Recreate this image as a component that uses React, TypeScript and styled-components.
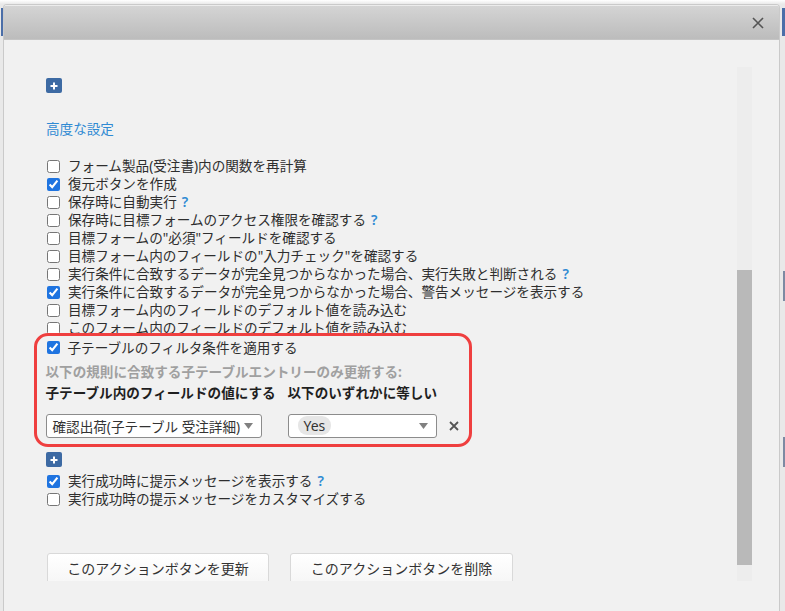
import React from "react";
import styled, { createGlobalStyle } from "styled-components";

const Global = createGlobalStyle`
  html, body { margin: 0; padding: 0; background: #f3f3f3; }
  body { font-family: "Noto Sans", "Noto Sans CJK JP", sans-serif; }
  * { box-sizing: border-box; }
`;

const Page = styled.div`
  display: flex;
  width: 785px;
  height: 611px;
  padding-top: 4px;
  overflow: hidden;
  background: linear-gradient(#ffffff 0, #e9e9e9 4px);
`;

const Gutter = styled.div<{ $w: number }>`
  width: ${(p) => p.$w}px;
  flex: none;
  display: flex;
  flex-direction: column;
  align-items: flex-end;
`;

const Mark = styled.div<{ $top: number; $h: number; $c: string; $w?: number }>`
  margin-top: ${(p) => p.$top}px;
  height: ${(p) => p.$h}px;
  width: ${(p) => p.$w ?? 3}px;
  background: ${(p) => p.$c};
`;

const Dialog = styled.div`
  width: 777px;
  height: 607px;
  flex: none;
  display: flex;
  flex-direction: column;
  border: 1px solid #cacaca;
  border-bottom: none;
  border-radius: 4px 4px 0 0;
  background: #f1f1f1;
  overflow: hidden;
`;

const Header = styled.div`
  height: 35px;
  flex: none;
  display: flex;
  align-items: center;
  justify-content: flex-end;
  padding-right: 14px;
  background: linear-gradient(#d4d4d4, #bcbcbc);
  border-top: 1px solid #ececec;
  border-bottom: 1px solid #c4c4c4;
`;

const CloseBtn = styled.button`
  width: 14px;
  height: 14px;
  padding: 0;
  border: none;
  background: none;
  display: flex;
  align-items: center;
  justify-content: center;
`;

const Body = styled.div`
  display: flex;
  padding: 27px 27px 0 26px;
  gap: 12px;
`;

const Viewport = styled.div`
  flex: 1;
  height: 514px;
  overflow: hidden;
  padding-left: 16px;
  display: flex;
  flex-direction: column;
  color: #2e2e2e;
  font-family: "Noto Sans", "Noto Sans CJK JP", sans-serif;
  font-size: 13.6px;
`;

const Track = styled.div`
  width: 15px;
  height: 514px;
  flex: none;
  background: #ededed;
  display: flex;
  flex-direction: column;
`;

const Thumb = styled.div`
  margin-top: 203px;
  height: 295px;
  background: #b9b9b9;
`;

const PlusBtn = styled.div<{ $mt: number }>`
  width: 16px;
  height: 15px;
  margin-top: ${(p) => p.$mt}px;
  border-radius: 2px;
  background: #3d6aa3;
  display: flex;
  align-items: center;
  justify-content: center;
  flex: none;
`;

const SectionLink = styled.div`
  margin-top: 27px;
  height: 18px;
  line-height: 18px;
  color: #2f8ad3;
`;

const List = styled.div<{ $mt: number }>`
  margin-top: ${(p) => p.$mt}px;
  display: flex;
  flex-direction: column;
`;

const Row = styled.label`
  display: flex;
  align-items: center;
  height: 18px;
  line-height: 18px;
  white-space: nowrap;
  gap: 8px;
  padding-left: 1px;
`;

const Check = styled.input.attrs({ type: "checkbox", readOnly: true })`
  width: 13px;
  height: 13px;
  margin: 0;
  flex: none;
  accent-color: #1f74e0;
`;

const Help = styled.span`
  color: #2f8ad3;
  font-weight: 600;
  margin-left: 5px;
  font-size: 14px;
`;

const Highlight = styled.div`
  position: relative;
  margin-top: -4px;
  margin-left: -12px;
  width: 438px;
  border: 3.5px solid #ef3f3f;
  border-radius: 14px;
  background: #f1f1f1;
  padding: 2.5px 0 6.5px 8.5px;
  display: flex;
  flex-direction: column;
`;

const Hint = styled.div`
  margin-top: 6px;
  height: 18px;
  line-height: 18px;
  color: #a0a0a0;
  font-weight: 700;
  white-space: nowrap;
`;

const Labels = styled.div`
  margin-top: 3px;
  height: 18px;
  line-height: 18px;
  display: flex;
  font-weight: 700;
  color: #1f1f1f;
  white-space: nowrap;
`;

const LabelCell = styled.div<{ $w: number }>`
  width: ${(p) => p.$w}px;
`;

const Controls = styled.div`
  margin-top: 12px;
  display: flex;
  align-items: center;
`;

const Select = styled.div<{ $w: number; $ml?: number; $pl: number }>`
  width: ${(p) => p.$w}px;
  margin-left: ${(p) => p.$ml ?? 0}px;
  height: 24px;
  border: 1px solid #8c8c8c;
  border-radius: 3px;
  background: #fff;
  display: flex;
  align-items: center;
  justify-content: space-between;
  padding: 0 8px 0 ${(p) => p.$pl}px;
  white-space: nowrap;
  color: #333;
`;

const Tag = styled.span`
  height: 19px;
  line-height: 19px;
  padding: 0 6px;
  border-radius: 9px;
  background: #e6e6e6;
  font-size: 14px;
`;

const Remove = styled.div`
  margin-left: 12px;
  display: flex;
  align-items: center;
`;

const Buttons = styled.div`
  margin-top: 45px;
  display: flex;
  gap: 21px;
  padding-left: 1px;
`;

const ActionButton = styled.button<{ $w: number }>`
  width: ${(p) => p.$w}px;
  height: 32px;
  flex: none;
  border: 1px solid #d9d9d9;
  border-radius: 3px;
  background: linear-gradient(#ffffff, #f6f6f6);
  font-family: "Noto Sans", "Noto Sans CJK JP", sans-serif;
  font-size: 14px;
  color: #333;
  padding: 0 0 2px;
`;

const Plus = () => (
  <svg width="8" height="8" viewBox="0 0 8 8">
    <path d="M4 0.5v7M0.5 4h7" stroke="#fff" strokeWidth="2" />
  </svg>
);

const Caret = () => (
  <svg width="9" height="6" viewBox="0 0 9 6">
    <path d="M0 0h9L4.5 6z" fill="#808080" />
  </svg>
);

type Item = { text: string; checked?: boolean; help?: boolean };

const items: Item[] = [
  { text: "フォーム製品(受注書)内の関数を再計算" },
  { text: "復元ボタンを作成", checked: true },
  { text: "保存時に自動実行", help: true },
  { text: "保存時に目標フォームのアクセス権限を確認する", help: true },
  { text: "目標フォームの\"必須\"フィールドを確認する" },
  { text: "目標フォーム内のフィールドの\"入力チェック\"を確認する" },
  { text: "実行条件に合致するデータが完全見つからなかった場合、実行失敗と判断される", help: true },
  { text: "実行条件に合致するデータが完全見つからなかった場合、警告メッセージを表示する", checked: true },
  { text: "目標フォーム内のフィールドのデフォルト値を読み込む" },
  { text: "このフォーム内のフィールドのデフォルト値を読み込む" },
];

const after: Item[] = [
  { text: "実行成功時に提示メッセージを表示する", checked: true, help: true },
  { text: "実行成功時の提示メッセージをカスタマイズする" },
];

const CheckRow = ({ item }: { item: Item }) => (
  <Row>
    <Check defaultChecked={!!item.checked} />
    <span>
      {item.text}
      {item.help && <Help>?</Help>}
    </span>
  </Row>
);

export default function App() {
  return (
    <>
      <Global />
      <Page>
        <Gutter $w={3}>
          <Mark $top={4} $h={28} $c="#4b6ea8" $w={2} />
        </Gutter>
        <Dialog>
          <Header>
            <CloseBtn aria-label="close">
              <svg width="12" height="12" viewBox="0 0 12 12">
                <path d="M1 1l10 10M11 1L1 11" stroke="#555" strokeWidth="1.6" />
              </svg>
            </CloseBtn>
          </Header>
          <Body>
            <Viewport>
              <PlusBtn $mt={11}>
                <Plus />
              </PlusBtn>
              <SectionLink>高度な設定</SectionLink>
              <List $mt={19}>
                {items.map((it, i) => (
                  <CheckRow key={i} item={it} />
                ))}
              </List>
              <Highlight>
                <CheckRow item={{ text: "子テーブルのフィルタ条件を適用する", checked: true }} />
                <Hint>以下の規則に合致する子テーブルエントリーのみ更新する:</Hint>
                <Labels>
                  <LabelCell $w={242}>子テーブル内のフィールドの値にする</LabelCell>
                  <LabelCell $w={160}>以下のいずれかに等しい</LabelCell>
                </Labels>
                <Controls>
                  <Select $w={216} $pl={6}>
                    <span>確認出荷(子テーブル 受注詳細)</span>
                    <Caret />
                  </Select>
                  <Select $w={149} $ml={26} $pl={9}>
                    <Tag>Yes</Tag>
                    <Caret />
                  </Select>
                  <Remove>
                    <svg width="10" height="10" viewBox="0 0 10 10">
                      <path d="M1 1l8 8M9 1L1 9" stroke="#555" strokeWidth="1.8" />
                    </svg>
                  </Remove>
                </Controls>
              </Highlight>
              <PlusBtn $mt={5}>
                <Plus />
              </PlusBtn>
              <List $mt={5}>
                {after.map((it, i) => (
                  <CheckRow key={i} item={it} />
                ))}
              </List>
              <Buttons>
                <ActionButton $w={222}>このアクションボタンを更新</ActionButton>
                <ActionButton $w={223}>このアクションボタンを削除</ActionButton>
              </Buttons>
            </Viewport>
            <Track>
              <Thumb />
            </Track>
          </Body>
        </Dialog>
        <Gutter $w={5}>
          <Mark $top={4} $h={28} $c="#4b6ea8" />
          <Mark $top={235} $h={30} $c="#7d8aa3" $w={2} />
          <Mark $top={136} $h={30} $c="#7d8aa3" $w={2} />
        </Gutter>
      </Page>
    </>
  );
}
